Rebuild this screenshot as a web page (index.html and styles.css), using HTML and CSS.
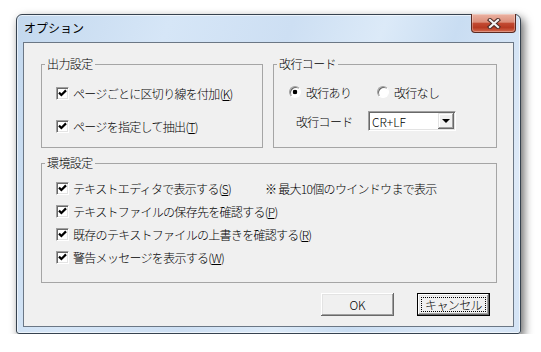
FILE: index.html
```html
<!DOCTYPE html>
<html>

<head>
    <meta charset="utf-8" />
    <title>オプション</title>
    <link rel="stylesheet" href="styles.css">
</head>

<body>
    <div class="window">
        <!-- タイトルバー -->
        <div class="titlebar">
            <span class="title">オプション</span>
            <span class="close">
                <svg width="14" height="11" viewBox="0 0 14 11">
                    <path d="M3 2 L11 9 M11 2 L3 9" stroke="#4b2b26" stroke-width="4.2" stroke-linecap="square" fill="none" />
                    <path d="M3 2 L11 9 M11 2 L3 9" stroke="#f4f4f4" stroke-width="2.2" stroke-linecap="square" fill="none" />
                </svg>
            </span>
        </div>

        <div class="client">
            <div class="top-row">
                <fieldset class="group output">
                    <legend>出力設定</legend>
                    <div class="body">
                        <label class="check"><span class="box"><svg width="11" height="11" viewBox="0 0 11 11"><path d="M2 4.6 L4.4 7 L9 2.4" stroke="#000" stroke-width="2.2" fill="none" /></svg></span><span>ページごとに区切り線を付加(<u>K</u>)</span></label>
                        <label class="check"><span class="box"><svg width="11" height="11" viewBox="0 0 11 11"><path d="M2 4.6 L4.4 7 L9 2.4" stroke="#000" stroke-width="2.2" fill="none" /></svg></span><span>ページを指定して抽出(<u>T</u>)</span></label>
                    </div>
                </fieldset>

                <fieldset class="group newline">
                    <legend>改行コード</legend>
                    <div class="body">
                        <div class="radios">
                            <label class="radio"><span class="dot on"></span>改行あり</label>
                            <label class="radio"><span class="dot"></span>改行なし</label>
                        </div>
                        <div class="code-row">
                            <span class="code-label">改行コード</span>
                            <div class="combo">
                                <span class="combo-value">CR+LF</span>
                                <span class="combo-btn"><span class="arrow"></span></span>
                            </div>
                        </div>
                    </div>
                </fieldset>
            </div>

            <fieldset class="group env">
                <legend>環境設定</legend>
                <div class="body">
                    <div class="row">
                        <label class="check wide"><span class="box"><svg width="11" height="11" viewBox="0 0 11 11"><path d="M2 4.6 L4.4 7 L9 2.4" stroke="#000" stroke-width="2.2" fill="none" /></svg></span><span>テキストエディタで表示する(<u>S</u>)</span></label>
                        <span class="note">※ 最大10個のウインドウまで表示</span>
                    </div>
                    <label class="check"><span class="box"><svg width="11" height="11" viewBox="0 0 11 11"><path d="M2 4.6 L4.4 7 L9 2.4" stroke="#000" stroke-width="2.2" fill="none" /></svg></span><span>テキストファイルの保存先を確認する(<u>P</u>)</span></label>
                    <label class="check"><span class="box"><svg width="11" height="11" viewBox="0 0 11 11"><path d="M2 4.6 L4.4 7 L9 2.4" stroke="#000" stroke-width="2.2" fill="none" /></svg></span><span>既存のテキストファイルの上書きを確認する(<u>R</u>)</span></label>
                    <label class="check"><span class="box"><svg width="11" height="11" viewBox="0 0 11 11"><path d="M2 4.6 L4.4 7 L9 2.4" stroke="#000" stroke-width="2.2" fill="none" /></svg></span><span>警告メッセージを表示する(<u>W</u>)</span></label>
                </div>
            </fieldset>

            <!-- ボタン -->
            <div class="buttons">
                <button class="btn">OK</button>
                <button class="btn default"><span class="focus">キャンセル</span></button>
            </div>
        </div>
    </div>
</body>

</html>
```

FILE: styles.css
```css
* {
    box-sizing: border-box;
}

body {
    margin: 0;
    background: #fff;
    font-family: "Noto Sans CJK JP", sans-serif;
    font-size: 12px;
    font-weight: 300;
    color: #000;
}

.window {
    width: 505px;
    height: 320px;
    margin: 14px 0 0 16px;
    padding: 0 6px 6px;
    display: flex;
    flex-direction: column;
    border: 1px solid #36424f;
    border-radius: 6px 6px 3px 3px;
    background: linear-gradient(110deg, #c3d8ee 0%, #d6e6f7 25%, #cddff3 45%, #dceaf8 60%, #c9ddf2 72%, #dde9f7 90%, #d3e3f5 100%);
    box-shadow: 3px 4px 10px rgba(0, 0, 0, .6), inset 0 0 0 1px rgba(255, 255, 255, .6);
}

.titlebar {
    height: 27px;
    display: flex;
    justify-content: space-between;
    align-items: flex-start;
}

.title {
    padding: 5px 0 0 1px;
    line-height: 16px;
    font-weight: 400;
}

.close {
    width: 45px;
    height: 19px;
    margin: -1px -2px 0 0;
    display: flex;
    align-items: center;
    justify-content: center;
    border: 1px solid #5a2a22;
    border-top: 0;
    border-radius: 0 0 4px 4px;
    background: linear-gradient(#ebb3a3 0%, #dc8f7b 45%, #c24a32 52%, #b73a22 75%, #d46a4e 100%);
    box-shadow: inset 0 0 0 1px rgba(255, 255, 255, .3);
}

.client {
    flex: 1;
    padding: 14px 16px 0 17px;
    display: flex;
    flex-direction: column;
    border: 1px solid #6b7785;
    background: #f0f0f0;
}

.top-row {
    display: flex;
    gap: 10px;
}

.group {
    margin: 0;
    padding: 0;
    min-width: 0;
    border: 1px solid #a5a5a5;
}

.group legend {
    margin-left: 3px;
    padding: 0 2px;
    line-height: 14px;
    letter-spacing: -0.6px;
}

.output {
    width: 222px;
    height: 91px;
}

.newline {
    width: 224px;
    height: 91px;
}

.env {
    height: 127px;
    margin-top: 8px;
}

.output .body {
    padding: 12px 0 0 14px;
    display: flex;
    flex-direction: column;
    gap: 13px;
}

.newline .body {
    padding: 11px 0 0 15px;
    display: flex;
    flex-direction: column;
    gap: 9px;
}

.env .body {
    padding: 8px 0 0 14px;
    display: flex;
    flex-direction: column;
    gap: 3px;
}

.check,
.radio,
.row,
.code-row {
    display: flex;
    align-items: center;
    height: 20px;
    letter-spacing: -0.7px;
}

.check {
    gap: 4px;
}

.check.wide {
    width: 209px;
}

.box {
    width: 13px;
    height: 13px;
    flex: none;
    background: #fff;
    border: 1px solid;
    border-color: #a0a0a0 #fff #fff #a0a0a0;
    box-shadow: inset 1px 1px #696969, inset -1px -1px #e3e3e3;
}

.box svg {
    display: block;
}

.radios {
    display: flex;
}

.radio {
    gap: 5px;
}

.radio:first-child {
    width: 88px;
}

.dot {
    width: 12px;
    height: 12px;
    flex: none;
    border-radius: 50%;
    border: 1px solid;
    border-color: #a0a0a0 #fff #fff #a0a0a0;
    background: #fff;
    box-shadow: inset 1px 1px #696969;
}

.dot.on {
    background: radial-gradient(circle, #000 0 2px, #fff 2.6px);
}

.code-label {
    width: 72px;
    margin-left: 7px;
}

.combo {
    width: 88px;
    height: 20px;
    padding: 1px;
    display: flex;
    align-items: center;
    background: #fff;
    border: 1px solid;
    border-color: #a0a0a0 #fff #fff #a0a0a0;
    box-shadow: inset 1px 1px #696969, inset -1px -1px #e3e3e3;
}

.combo-value {
    flex: 1;
    padding-left: 2px;
    letter-spacing: 0;
}

.combo-btn {
    width: 16px;
    height: 16px;
    display: flex;
    align-items: center;
    justify-content: center;
    background: #f0f0f0;
    box-shadow: inset -1px -1px #696969, inset 1px 1px #e3e3e3, inset -2px -2px #a0a0a0, inset 2px 2px #fff;
}

.arrow {
    width: 0;
    height: 0;
    border-top: 4px solid #000;
    border-left: 4px solid transparent;
    border-right: 4px solid transparent;
}

.buttons {
    display: flex;
    justify-content: flex-end;
    gap: 23px;
    margin: 10px 7px 0 0;
}

.btn {
    width: 73px;
    height: 23px;
    padding: 0;
    font: inherit;
    color: #000;
    border: 0;
    background: #f0f0f0;
    box-shadow: inset -1px -1px #696969, inset 1px 1px #fff, inset -2px -2px #a0a0a0, inset 2px 2px #e3e3e3;
}

.btn.default {
    padding: 3px;
    border: 1px solid #000;
}

.focus {
    display: flex;
    align-items: center;
    justify-content: center;
    height: 100%;
    border: 1px dotted #000;
    letter-spacing: -0.6px;
}
```
